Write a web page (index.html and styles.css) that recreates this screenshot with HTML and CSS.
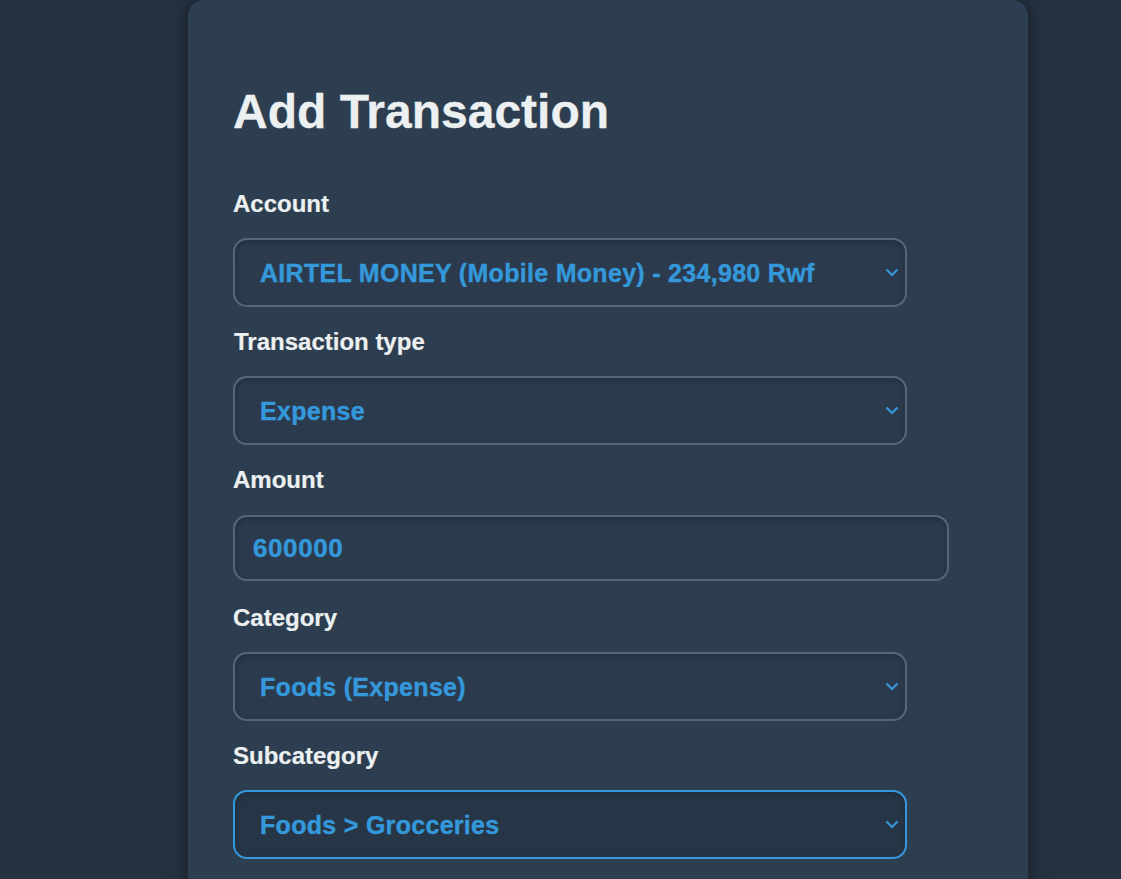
FILE: index.html
```html
<!DOCTYPE html>
<html lang="en">
<head>
<meta charset="utf-8">
<title>Add Transaction</title>
<link rel="stylesheet" href="styles.css">
</head>
<body>
<main class="card">
  <h1 class="title">Add Transaction</h1>
  <form class="form">
    <div class="field">
      <label class="label" for="account">Account</label>
      <div class="select-wrap">
        <select id="account" class="control select">
          <option>AIRTEL MONEY (Mobile Money) - 234,980 Rwf</option>
        </select>
        <svg class="chevron" width="14" height="9" viewBox="0 0 14 9"><path d="M1.5 1.5 L7 7 L12.5 1.5" fill="none" stroke="#3498db" stroke-width="2.2"/></svg>
      </div>
    </div>
    <div class="field">
      <label class="label label-type" for="type">Transaction type</label>
      <div class="select-wrap">
        <select id="type" class="control select">
          <option>Expense</option>
        </select>
        <svg class="chevron" width="14" height="9" viewBox="0 0 14 9"><path d="M1.5 1.5 L7 7 L12.5 1.5" fill="none" stroke="#3498db" stroke-width="2.2"/></svg>
      </div>
    </div>
    <div class="field">
      <label class="label" for="amount">Amount</label>
      <div class="input-wrap">
        <input id="amount" class="control input" type="text" value="600000">
      </div>
    </div>
    <div class="field">
      <label class="label" for="category">Category</label>
      <div class="select-wrap">
        <select id="category" class="control select">
          <option>Foods (Expense)</option>
        </select>
        <svg class="chevron" width="14" height="9" viewBox="0 0 14 9"><path d="M1.5 1.5 L7 7 L12.5 1.5" fill="none" stroke="#3498db" stroke-width="2.2"/></svg>
      </div>
    </div>
    <div class="field">
      <label class="label" for="subcategory">Subcategory</label>
      <div class="select-wrap">
        <select id="subcategory" class="control select focused">
          <option>Foods &gt; Grocceries</option>
        </select>
        <svg class="chevron" width="14" height="9" viewBox="0 0 14 9"><path d="M1.5 1.5 L7 7 L12.5 1.5" fill="none" stroke="#3498db" stroke-width="2.2"/></svg>
      </div>
    </div>
  </form>
</main>
</body>
</html>
```

FILE: styles.css
```css
html, body {
  margin: 0;
  padding: 0;
}

body {
  background: #253341;
  font-family: "Liberation Sans", Arial, sans-serif;
  color: #ecf0f1;
  height: 879px;
  overflow: hidden;
}

.card {
  width: 840px;
  box-sizing: border-box;
  margin-left: 188px;
  min-height: 1000px;
  background: #2c3e50;
  border-radius: 16px 16px 0 0;
  box-shadow: 0 0 20px rgba(0, 0, 0, 0.45);
  padding: 84px 45px 40px;
}

.title {
  margin: 0 0 51px;
  font-size: 48px;
  line-height: 55px;
  font-weight: 700;
  color: #ecf0f1;
  -webkit-text-stroke: 0.3px #ecf0f1;
}

.form {
  display: flex;
  flex-direction: column;
}

.field {
  display: flex;
  flex-direction: column;
  align-items: flex-start;
  margin-bottom: 21px;
}

.label {
  display: block;
  font-size: 24px;
  line-height: 27px;
  font-weight: 700;
  margin-bottom: 21px;
  color: #ecf0f1;
  -webkit-text-stroke: 0.2px #ecf0f1;
}

.label-type {
  padding-left: 1px;
}

.select-wrap {
  position: relative;
  width: 674px;
  height: 69px;
}

.input-wrap {
  width: 716px;
  height: 69px;
  display: flex;
  align-items: flex-start;
}

.control {
  box-sizing: border-box;
  font-family: "Liberation Sans", Arial, sans-serif;
  font-weight: 700;
  color: #3498db;
  -webkit-text-stroke: 0.4px #3498db;
  background: #2b3b4d;
  border: 2px solid #56677a;
  border-radius: 14px;
  box-shadow: inset 0 2px 6px rgba(0, 0, 0, 0.22);
  outline: none;
  margin: 0;
}

.select {
  appearance: none;
  -webkit-appearance: none;
  width: 674px;
  height: 69px;
  font-size: 25px;
  letter-spacing: 0.3px;
  padding: 0 40px 0 25px;
}

.select.focused {
  border-color: #3498db;
  background: #273646;
}

.input {
  width: 716px;
  height: 66px;
  margin-top: 1px;
  font-size: 26px;
  letter-spacing: 0.6px;
  padding: 0 18px;
}

.chevron {
  position: absolute;
  right: 8px;
  top: 30px;
  pointer-events: none;
}
```
